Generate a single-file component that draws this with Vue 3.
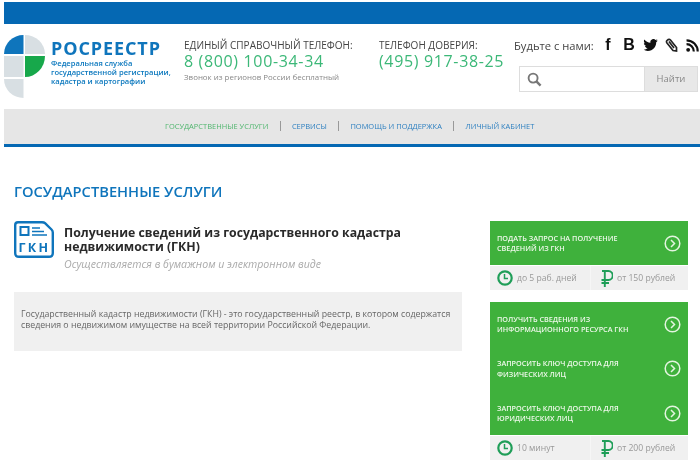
<template>
  <div class="page">
    <div class="topbar"></div>

    <header class="header">
      <div class="logo">
        <svg class="logo-mark" width="41" height="63" viewBox="0 0 41 63">
          <path d="M19.500 0 V19 H0 A19.500 19 0 0 1 19.500 0 Z" fill="#0f75bc" />
          <path d="M21 0 A20 19 0 0 1 41 19 H21 Z" fill="#d8dfe3" />
          <path d="M21 21 H41 A20 21 0 0 1 21 42 Z" fill="#17a84b" />
          <rect x="0" y="21" width="19.500" height="21" fill="#d8dfe3" />
          <path d="M0 44 H19.500 V63 A19.500 19 0 0 1 0 44 Z" fill="#d8dfe3" />
        </svg>
        <div class="logo-text">
          <div class="logo-name">РОСРЕЕСТР</div>
          <div class="logo-sub">Федеральная служба<br />государственной регистрации,<br />кадастра и картографии</div>
        </div>
      </div>

      <div class="phone phone-main">
        <div class="phone-label">ЕДИНЫЙ СПРАВОЧНЫЙ ТЕЛЕФОН:</div>
        <div class="phone-num">8 (800) 100-34-34</div>
        <div class="phone-note">Звонок из регионов России бесплатный</div>
      </div>

      <div class="phone phone-trust">
        <div class="phone-label">ТЕЛЕФОН ДОВЕРИЯ:</div>
        <div class="phone-num">(495) 917-38-25</div>
      </div>

      <div class="side">
        <div class="social">
          <span class="social-label">Будьте с нами:</span>
          <span class="social-icon social-f">f</span>
          <span class="social-icon social-b">B</span>
          <span class="social-icon">
            <svg width="15" height="12" viewBox="0 0 24 20">
              <path d="M24 2.400c-.9.4-1.800.7-2.800.8 1-.6 1.800-1.500 2.200-2.700-1 .6-2 1-3.100 1.200A4.900 4.900 0 0 0 11.900 6.200C7.800 6 4.200 4 1.700.9c-1.300 2.200-.7 5.100 1.500 6.500-.8 0-1.500-.2-2.200-.6 0 2.300 1.600 4.400 3.900 4.900-.7.2-1.500.2-2.200.1.600 2 2.400 3.400 4.600 3.400A9.900 9.900 0 0 1 0 17.700 14 14 0 0 0 7.500 20c9.100 0 14.300-7.700 14-14.600 1-.7 1.800-1.600 2.500-3z" fill="#111" />
            </svg>
          </span>
          <span class="social-icon">
            <svg width="13" height="14" viewBox="0 0 13 14">
              <path d="M2 2.500 Q4 .5 5.500 2 L11.500 9.500 L11.500 13 L8 12.500 L2 5 Q1 3.500 2 2.500 Z M4 3.500 L9 10" fill="none" stroke="#222" stroke-width="1.700" />
            </svg>
          </span>
          <span class="social-icon">
            <svg width="13" height="13" viewBox="0 0 12 12">
              <circle cx="2" cy="10" r="1.800" fill="#111" />
              <path d="M.5 4.800 A6.700 6.700 0 0 1 7.200 11.500 M.5 1.200 A10.300 10.300 0 0 1 10.800 11.500" fill="none" stroke="#111" stroke-width="2" />
            </svg>
          </span>
        </div>
        <div class="search">
          <div class="search-field">
            <svg width="15" height="15" viewBox="0 0 16 16">
              <circle cx="6.500" cy="6.500" r="4.800" fill="none" stroke="#777" stroke-width="2" />
              <path d="M10 10 L14.500 14.500" stroke="#777" stroke-width="2.600" />
            </svg>
          </div>
          <div class="search-btn">Найти</div>
        </div>
      </div>
    </header>

    <nav class="nav">
      <a class="nav-link active">ГОСУДАРСТВЕННЫЕ УСЛУГИ</a>
      <i class="nav-sep"></i>
      <a class="nav-link">СЕРВИСЫ</a>
      <i class="nav-sep"></i>
      <a class="nav-link">ПОМОЩЬ И ПОДДЕРЖКА</a>
      <i class="nav-sep"></i>
      <a class="nav-link">ЛИЧНЫЙ КАБИНЕТ</a>
    </nav>

    <h1 class="title">ГОСУДАРСТВЕННЫЕ УСЛУГИ</h1>

    <main class="content">
      <section class="left">
        <div class="service">
          <svg class="service-icon" width="40" height="37" viewBox="0 0 40 37">
            <path d="M4 1.200 H28 Q30 1.200 31 2.200 L37.500 8.500 Q38.800 9.800 38.800 11.500 V32 Q38.800 35.800 35 35.800 H5 Q1.200 35.800 1.200 32 V4 Q1.200 1.200 4 1.200 Z" fill="none" stroke="#0f75bc" stroke-width="2.400" />
            <rect x="6.500" y="6" width="8" height="8" fill="none" stroke="#0f75bc" stroke-width="2" />
            <path d="M18 7 H26 M18 10.500 H30 M18 14 H33" stroke="#0f75bc" stroke-width="1.700" />
            <text x="20.500" y="31" text-anchor="middle" class="service-icon-text">ГКН</text>
          </svg>
          <div class="service-text">
            <h2 class="service-title">Получение сведений из государственного кадастра недвижимости (ГКН)</h2>
            <div class="service-sub">Осуществляется в бумажном и электронном виде</div>
          </div>
        </div>
        <div class="info">
          Государственный кадастр недвижимости (ГКН) - это государственный реестр, в котором содержатся
          сведения о недвижимом имуществе на всей территории Российской Федерации.
        </div>
      </section>

      <aside class="right">
        <div v-for="group in groups" :key="group.time" class="group">
          <div class="actions">
            <div v-for="action in group.actions" :key="action" class="action">
              <span class="action-text">{{ action }}</span>
              <svg class="chevron" width="17" height="17" viewBox="0 0 17 17">
                <circle cx="8.500" cy="8.500" r="7.300" fill="none" stroke="#e4f5e0" stroke-width="1.500" />
                <path d="M7 5 L10.500 8.500 L7 12" fill="none" stroke="#e4f5e0" stroke-width="1.500" />
              </svg>
            </div>
          </div>
          <div class="meta">
            <div class="meta-cell meta-time">
              <svg width="16" height="16" viewBox="0 0 16 16">
                <circle cx="8" cy="8" r="6.700" fill="none" stroke="#1f9e58" stroke-width="2.200" />
                <path d="M7.500 4 V8.500 H11" fill="none" stroke="#1f9e58" stroke-width="1.500" />
              </svg>
              <span>{{ group.time }}</span>
            </div>
            <div class="meta-cell meta-price">
              <svg width="12" height="17" viewBox="0 0 12 17">
                <path d="M1 1 H7.500 A4.200 4.500 0 0 1 7.500 10 H0.500 M0.500 13 H8 M3.800 1 V17" fill="none" stroke="#1f9e58" stroke-width="1.900" />
              </svg>
              <span>{{ group.price }}</span>
            </div>
          </div>
        </div>
      </aside>
    </main>
  </div>
</template>

<script setup>
const groups = [
  {
    actions: ['Подать запрос на получение сведений из ГКН'],
    time: 'до 5 раб. дней',
    price: 'от 150 рублей'
  },
  {
    actions: [
      'Получить сведения из информационного ресурса ГКН',
      'Запросить ключ доступа для физических лиц',
      'Запросить ключ доступа для юридических лиц'
    ],
    time: '10 минут',
    price: 'от 200 рублей'
  }
]
</script>

<style>
html,
body {
  margin: 0;
  background: #fff;
  overflow: hidden;
}
</style>

<style scoped>
.page {
  width: 700px;
  height: 472px;
  overflow: hidden;
  font-family: "Open Sans", "Noto Sans", sans-serif;
  color: #333;
  padding-top: 2px;
  box-sizing: border-box;
  filter: blur(0.4px);
}

.topbar {
  height: 22px;
  margin-left: 4px;
  background: #0568b3;
}

.header {
  display: flex;
  height: 85px;
  padding-left: 4px;
  box-sizing: border-box;
}

.logo {
  display: flex;
  flex: none;
  width: 180px;
  padding-top: 11px;
  box-sizing: border-box;
}

.logo-mark {
  flex: none;
}

.logo-text {
  margin-left: 6px;
}

.logo-name {
  margin-top: 3px;
  font-size: 18px;
  line-height: 21px;
  font-weight: 700;
  letter-spacing: 0.9px;
  color: #0f75bc;
  white-space: nowrap;
}

.logo-sub {
  font-size: 7.600px;
  line-height: 8.800px;
  font-weight: 600;
  color: #0b78be;
  white-space: nowrap;
}

.phone {
  flex: none;
  padding-top: 14px;
  box-sizing: border-box;
}

.phone-main {
  width: 195px;
}

.phone-trust {
  width: 135px;
}

.phone-label {
  font-size: 10px;
  line-height: 14px;
  color: #444;
  white-space: nowrap;
}

.phone-num {
  font-size: 16px;
  line-height: 18px;
  letter-spacing: 0.65px;
  color: #3cb878;
  white-space: nowrap;
}

.phone-note {
  font-size: 7.900px;
  line-height: 11px;
  margin-top: 2px;
  color: #888;
  white-space: nowrap;
}

.side {
  flex: none;
  padding-top: 13px;
}

.social {
  display: flex;
  align-items: center;
  height: 16px;
}

.social-label {
  width: 83.500px;
  font-size: 11.200px;
  color: #444;
  white-space: nowrap;
}

.social-icon {
  display: flex;
  align-items: center;
  justify-content: center;
  width: 21px;
  font-family: "Liberation Sans", sans-serif;
  font-weight: 700;
  color: #111;
}

.social-f,
.social-b {
  font-size: 16px;
}

.search {
  display: flex;
  width: 179px;
  height: 26px;
  margin-top: 13px;
  margin-left: 5px;
  border: 1px solid #ddd;
  box-sizing: border-box;
}

.search-field {
  flex: 1;
  display: flex;
  align-items: center;
  padding-left: 7px;
}

.search-btn {
  width: 52px;
  background: #e8e8e8;
  border-left: 1px solid #ddd;
  font-size: 9.500px;
  line-height: 24px;
  text-align: center;
  color: #888;
}

.nav {
  display: flex;
  align-items: center;
  gap: 11.300px;
  height: 35px;
  margin-left: 4px;
  padding-left: 161px;
  padding-bottom: 1px;
  box-sizing: border-box;
  background: #e6e6e6;
}

.nav-link {
  font-size: 7.480px;
  color: #2c7fc0;
  white-space: nowrap;
}

.nav-link.active {
  color: #4fb56d;
}

.nav-sep {
  width: 1px;
  height: 10px;
  background: #999;
}

.title {
  margin: 0 0 0 4px;
  padding: 34px 0 0 10px;
  border-top: 3px solid #0568b3;
  font-size: 14.700px;
  line-height: 20px;
  font-weight: 600;
  color: #0f75bc;
}

.content {
  display: flex;
  padding: 18px 12px 0 14px;
  justify-content: space-between;
}

.left {
  width: 448px;
}

.service {
  display: flex;
  height: 73px;
  padding-top: 2px;
  box-sizing: border-box;
}

.service-icon {
  flex: none;
}

.service-icon-text {
  font-family: "Open Sans", sans-serif;
  font-size: 12.500px;
  font-weight: 700;
  letter-spacing: 2.300px;
  fill: #0f75bc;
}

.service-text {
  margin-left: 10px;
  padding-top: 5px;
}

.service-title {
  margin: 0;
  max-width: 360px;
  font-size: 12.300px;
  line-height: 14px;
  font-weight: 700;
  color: #2a2a2a;
}

.service-sub {
  margin-top: 3px;
  font-size: 10.600px;
  font-style: italic;
  color: #aaa;
}

.info {
  box-sizing: border-box;
  padding: 17px 7px 0;
  height: 59px;
  background: #f0f0f0;
  font-size: 8.770px;
  line-height: 11px;
  color: #666;
}

.right {
  width: 198px;
  padding-top: 2px;
}

.group {
  margin-bottom: 12px;
}

.actions {
  background: #3fb13c;
}

.action {
  display: flex;
  align-items: center;
  justify-content: space-between;
  height: 44.300px;
  padding: 0 7px 0 7px;
}

.action-text {
  max-width: 150px;
  font-size: 7.250px;
  line-height: 10.500px;
  font-weight: 600;
  text-transform: uppercase;
  color: #eef8ea;
}

.chevron {
  flex: none;
}

.meta {
  display: flex;
  height: 24px;
  margin-top: 1px;
  background: #f0f0f0;
  font-size: 8.600px;
  color: #999;
}

.meta-cell {
  display: flex;
  align-items: center;
  gap: 4px;
  white-space: nowrap;
}

.meta-time {
  width: 100px;
  padding-left: 7px;
  box-sizing: border-box;
}

.meta-price {
  padding-left: 10px;
  border-left: 1px solid #f6f6f6;
}
</style>
